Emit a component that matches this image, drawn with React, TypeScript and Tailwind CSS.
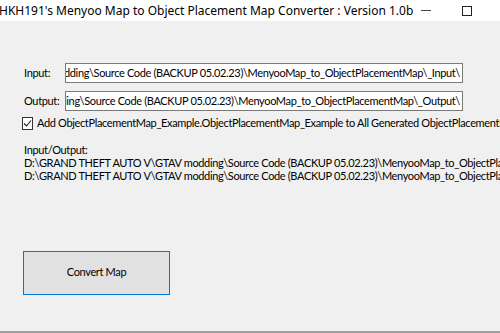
const INPUT_PATH =
  "D:\\GRAND THEFT AUTO V\\GTAV modding\\Source Code (BACKUP 05.02.23)\\MenyooMap_to_ObjectPlacementMap\\_Input\\";
const OUTPUT_PATH =
  "D:\\GRAND THEFT AUTO V\\GTAV modding\\Source Code (BACKUP 05.02.23)\\MenyooMap_to_ObjectPlacementMap\\_Output\\";

function PathBox({ value }: { value: string }) {
  return (
    <div className="flex h-[20px] w-[398px] items-center justify-end overflow-hidden border border-[#7a7a7a] bg-white pr-[2px]">
      <span className="whitespace-nowrap">{value}</span>
    </div>
  );
}

export default function App() {
  return (
    <div className="flex h-[333px] w-[500px] flex-col overflow-hidden bg-[#f0f0f0] text-black">
      {/* Title bar */}
      <div className="flex h-[21px] shrink-0 items-center bg-white font-['Noto_Sans',sans-serif] text-[12px]">
        <span className="ml-[-1px] flex-1 whitespace-nowrap">
          HKH191's Menyoo Map to Object Placement Map Converter : Version 1.0b
        </span>
        <div className="mr-[28px] flex items-center gap-[31px]">
          <div className="h-px w-[10px] bg-[#444]" />
          <div className="h-[10px] w-[10px] border border-[#222]" />
        </div>
      </div>

      {/* Body */}
      <div className="flex flex-1 flex-col pl-[24px] pt-[42px] font-['Lato',sans-serif] text-[11px] tracking-[-0.35px]">
        <div className="flex items-center">
          <span className="w-[41px]">Input:</span>
          <PathBox value={INPUT_PATH} />
        </div>
        <div className="mt-[8px] flex items-center">
          <span className="w-[41px]">Output:</span>
          <PathBox value={OUTPUT_PATH} />
        </div>
        <div className="ml-[-2px] mt-[4px] flex items-center gap-[4px] whitespace-nowrap">
          <div className="flex h-[13px] w-[13px] items-center justify-center border border-[#333] bg-white">
            <svg width="9" height="9" viewBox="0 0 9 9">
              <path d="M1 4.5 L3.5 7 L8 1.5" fill="none" stroke="#222" strokeWidth="1.1" />
            </svg>
          </div>
          <span>
            Add ObjectPlacementMap_Example.ObjectPlacementMap_Example to All Generated ObjectPlacementMap
          </span>
        </div>

        <div className="mt-[11px] flex flex-col whitespace-nowrap leading-[13px]">
          <span>Input/Output:</span>
          <span>{INPUT_PATH}</span>
          <span>{OUTPUT_PATH}</span>
        </div>

        <button className="ml-[-1px] mt-[69px] h-[44px] w-[147px] border border-[#0078d7] bg-[#e1e1e1] text-[11px]">
          Convert Map
        </button>
      </div>
      <div className="h-[2px] shrink-0 bg-[#a0a0a0]" />
    </div>
  );
}
